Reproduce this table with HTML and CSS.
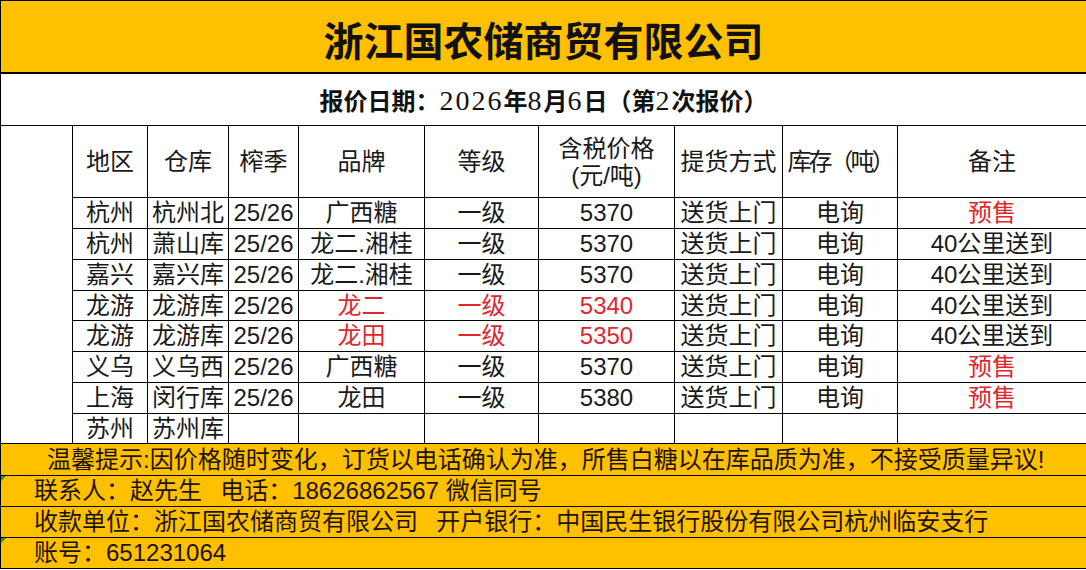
FILE: index.html
```html
<!DOCTYPE html>
<html lang="zh-CN">
<head>
<meta charset="utf-8">
<title>浙江国农储商贸有限公司 报价</title>
<link rel="stylesheet" href="styles.css">
</head>
<body>
<table class="sheet">
  <colgroup>
    <col class="c0"><col class="c1"><col class="c2"><col class="c3"><col class="c4">
    <col class="c5"><col class="c6"><col class="c7"><col class="c8"><col class="c9">
  </colgroup>
  <tr class="r-title"><td colspan="10" class="title">浙江国农储商贸有限公司</td></tr>
  <tr class="r-sub"><td colspan="10" class="sub">报价日期：<span class="num">2026</span>年<span class="num">8</span>月<span class="num">6</span>日（第<span class="num">2</span>次报价）</td></tr>
  <tr class="r-head">
    <td rowspan="9" class="blank"></td>
    <td>地区</td><td>仓库</td><td>榨季</td><td>品牌</td><td>等级</td>
    <td class="head2">含税价格<br>(元/吨)</td>
    <td>提货方式</td><td class="tight">库存（吨）</td><td>备注</td>
  </tr>
  <tr class="r-data"><td>杭州</td><td>杭州北</td><td>25/26</td><td>广西糖</td><td>一级</td><td>5370</td><td>送货上门</td><td>电询</td><td class="red">预售</td></tr>
  <tr class="r-data"><td>杭州</td><td>萧山库</td><td>25/26</td><td>龙二.湘桂</td><td>一级</td><td>5370</td><td>送货上门</td><td>电询</td><td>40公里送到</td></tr>
  <tr class="r-data"><td>嘉兴</td><td>嘉兴库</td><td>25/26</td><td>龙二.湘桂</td><td>一级</td><td>5370</td><td>送货上门</td><td>电询</td><td>40公里送到</td></tr>
  <tr class="r-data short"><td>龙游</td><td>龙游库</td><td>25/26</td><td class="red">龙二</td><td class="red">一级</td><td class="red">5340</td><td>送货上门</td><td>电询</td><td>40公里送到</td></tr>
  <tr class="r-data"><td>龙游</td><td>龙游库</td><td>25/26</td><td class="red">龙田</td><td class="red">一级</td><td class="red">5350</td><td>送货上门</td><td>电询</td><td>40公里送到</td></tr>
  <tr class="r-data"><td>义乌</td><td>义乌西</td><td>25/26</td><td>广西糖</td><td>一级</td><td>5370</td><td>送货上门</td><td>电询</td><td class="red">预售</td></tr>
  <tr class="r-data"><td>上海</td><td>闵行库</td><td>25/26</td><td>龙田</td><td>一级</td><td>5380</td><td>送货上门</td><td>电询</td><td class="red">预售</td></tr>
  <tr class="r-data short"><td>苏州</td><td>苏州库</td><td></td><td></td><td></td><td></td><td></td><td></td><td></td></tr>
  <tr class="r-foot first"><td colspan="10" class="foot tip">温馨提示:因价格随时变化，订货以电话确认为准，所售白糖以在库品质为准，不接受质量异议!</td></tr>
  <tr class="r-foot"><td colspan="10" class="foot flag">联系人：赵先生&nbsp;&nbsp;&thinsp;电话：18626862567 微信同号</td></tr>
  <tr class="r-foot"><td colspan="10" class="foot">收款单位：浙江国农储商贸有限公司&nbsp;&nbsp;&thinsp;开户银行：中国民生银行股份有限公司杭州临安支行</td></tr>
  <tr class="r-foot"><td colspan="10" class="foot flag">账号：651231064</td></tr>
</table>
</body>
</html>
```
FILE: styles.css
```css
html, body {
  margin: 0;
  padding: 0;
  background: #ffffff;
}

.sheet {
  border-collapse: collapse;
  table-layout: fixed;
  width: 1086px;
  font-family: "Liberation Sans", "Noto Sans CJK SC", sans-serif;
  color: #1a1a1a;
}

.c0 { width: 72px; }
.c1 { width: 75px; }
.c2 { width: 81px; }
.c3 { width: 70px; }
.c4 { width: 126px; }
.c5 { width: 114px; }
.c6 { width: 136px; }
.c7 { width: 108px; }
.c8 { width: 115px; }
.c9 { width: 189px; }

.sheet td {
  border: 1px solid #000;
  padding: 0;
  text-align: center;
  vertical-align: middle;
  white-space: nowrap;
  overflow: hidden;
  font-size: 24px;
  line-height: 1;
}

.r-title { height: 72px; }
.r-sub { height: 53px; }
.r-head { height: 72px; }
.r-data { height: 31px; }
.r-data.short { height: 30px; }
.r-foot { height: 31px; }
.r-foot.first { height: 32px; }

.sheet td.title {
  background: #ffc000;
  font-family: "Noto Sans CJK SC", serif;
  font-weight: 700;
  font-size: 40px;
  color: #111;
  padding-top: 6px;
  border-bottom-width: 2px;
}

.sheet td.sub {
  font-family: "Liberation Serif", "Noto Sans CJK SC", serif;
  font-weight: 700;
  font-size: 24px;
  color: #111;
  padding: 4px 0 0 0;
}

.sub .num {
  font-size: 28px;
  font-weight: 400;
  letter-spacing: 2px;
}

.sheet td.head2 {
  line-height: 27px;
}

.sheet td.tight {
  letter-spacing: -3px;
}

.red {
  color: #e0262f;
}

.sheet td.foot {
  background: #ffc000;
  text-align: left;
  font-size: 24px;
  padding-left: 33px;
  color: #1c1400;
  position: relative;
}

.sheet td.tip {
  padding-left: 46px;
}

.flag::before {
  content: "";
  position: absolute;
  left: 0;
  top: 0;
  width: 0;
  height: 0;
  border-top: 5px solid #2e8b2e;
  border-right: 5px solid transparent;
}
```
